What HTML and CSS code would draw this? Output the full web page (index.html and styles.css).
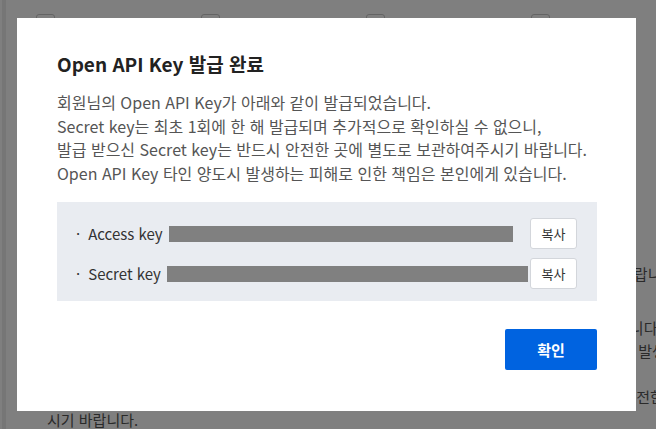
FILE: index.html
```html
<!DOCTYPE html>
<html lang="ko">
<head>
<meta charset="utf-8">
<title>Open API Key 발급 완료</title>
<link rel="stylesheet" href="styles.css">
</head>
<body>
<div class="page">
  <div class="side-line"></div>
  <div class="bg-top">
    <label class="bg-check"><span class="box"></span><span>서비스 이용약관</span></label>
    <label class="bg-check"><span class="box"></span><span>개인정보 수집</span></label>
    <label class="bg-check"><span class="box"></span><span>제3자 제공</span></label>
    <label class="bg-check"><span class="box"></span><span>수신 동의</span></label>
  </div>
  <div class="bg-text">
    <p>발급된 Open API Key는 회원님의 계정에 귀속됩니다.</p>
    <p>Secret key는 최초 1회만 확인하실 수 있으므로 반드시 안전한 곳에 별도로 보관하여 주시기 바랍니다.</p>
  </div>
  <div class="bg-text second">
    <p>Open API Key는 이용 목적에 맞게 사용하여야 하며, 회원님께서 직접 책임지고 관리하여야 합니다.</p>
    <p>Open API Key의 타인 양도, 대여 등으로 인하여 발생하는 모든 피해는 본인에게 있으며 회사는 발생</p>
    <p>않습니다.</p>
    <p>Key 유출이 의심되는 경우 즉시 재발급을 신청하시고 기존 Key는 사용하지 마시기 바랍니다. 안전한 이용을</p>
    <p>시기 바랍니다.</p>
  </div>
</div>
<div class="overlay"></div>
<div class="modal" role="dialog" aria-labelledby="modal-title">
  <h2 class="modal-title" id="modal-title">Open API Key 발급 완료</h2>
  <div class="modal-desc">
    <p>회원님의 Open API Key가 아래와 같이 발급되었습니다.</p>
    <p>Secret key는 최초 1회에 한 해 발급되며 추가적으로 확인하실 수 없으니,</p>
    <p>발급 받으신 Secret key는 반드시 안전한 곳에 별도로 보관하여주시기 바랍니다.</p>
    <p>Open API Key 타인 양도시 발생하는 피해로 인한 책임은 본인에게 있습니다.</p>
  </div>
  <div class="key-box">
    <div class="key-row">
      <span class="key-dot">·</span>
      <span class="key-label">Access key</span>
      <span class="key-value" style="width:344px"></span>
      <button class="copy-btn" type="button">복사</button>
    </div>
    <div class="key-row">
      <span class="key-dot">·</span>
      <span class="key-label">Secret key</span>
      <span class="key-value" style="width:361px"></span>
      <button class="copy-btn" type="button">복사</button>
    </div>
  </div>
  <div class="modal-actions">
    <button class="confirm-btn" type="button">확인</button>
  </div>
</div>
</body>
</html>
```

FILE: styles.css
```css
* {
  box-sizing: border-box;
}

html, body {
  margin: 0;
  padding: 0;
}

body {
  width: 656px;
  height: 429px;
  overflow: hidden;
  background: #ffffff;
  font-family: "Noto Sans CJK KR", "Noto Sans", sans-serif;
  color: #333333;
}

.page {
  position: relative;
  height: 429px;
  overflow: hidden;
}

.side-line {
  position: absolute;
  left: 2px;
  top: 0;
  width: 4px;
  height: 429px;
  background: #ededed;
}

.bg-top {
  display: flex;
  padding: 14px 0 0 36px;
  height: 37px;
}

.bg-check {
  display: flex;
  align-items: flex-start;
  gap: 15px;
  flex: none;
  width: 165px;
  overflow: hidden;
  white-space: nowrap;
  font-size: 15px;
  line-height: 23px;
  color: #444444;
}

.bg-check .box {
  width: 19px;
  height: 19px;
  border: 1px solid #c8c8c8;
  border-radius: 3px;
  background: #ffffff;
  flex: none;
}

.bg-text {
  margin-top: 201.5px;
  padding-left: 47px;
  font-size: 15px;
  line-height: 23px;
  color: #555555;
  white-space: nowrap;
}

.bg-text.second {
  margin-top: 31px;
}

.bg-text p {
  margin: 0;
}

.overlay {
  position: fixed;
  inset: 0;
  background: rgba(0, 0, 0, 0.5);
}

.modal {
  position: absolute;
  left: 17px;
  top: 18px;
  width: 619px;
  height: 393px;
  background: #ffffff;
  padding: 32px 39px 40px 40px;
  display: flex;
  flex-direction: column;
}

.modal-title {
  margin: 0;
  font-size: 19px;
  line-height: 28px;
  font-weight: 700;
  color: #222222;
}

.modal-desc {
  margin-top: 13px;
  font-size: 16px;
  line-height: 23.5px;
  color: #555555;
}

.modal-desc p {
  margin: 0;
  white-space: nowrap;
}

.key-box {
  margin-top: 17px;
  background: #e9ecf1;
  padding: 16px 20px 12px 19px;
  display: flex;
  flex-direction: column;
  gap: 9px;
}

.key-row {
  display: flex;
  align-items: center;
  height: 31px;
}

.key-dot {
  font-size: 15px;
  color: #333333;
  margin-right: 8px;
}

.key-label {
  font-size: 15px;
  color: #333333;
  white-space: nowrap;
  margin-right: 6px;
}

.key-value {
  display: block;
  height: 16px;
  background: #808080;
}

.copy-btn {
  margin-left: auto;
  width: 47px;
  height: 31px;
  border: 1px solid #d3d6db;
  border-radius: 3px;
  background: #ffffff;
  font-family: "Noto Sans CJK KR", "Noto Sans", sans-serif;
  font-size: 13px;
  color: #333333;
  padding: 0;
}

.modal-actions {
  margin-top: 28px;
  display: flex;
  justify-content: flex-end;
}

.confirm-btn {
  width: 92px;
  height: 41px;
  border: none;
  border-radius: 2px;
  background: #0063e0;
  color: #ffffff;
  font-family: "Noto Sans CJK KR", "Noto Sans", sans-serif;
  font-size: 15px;
  font-weight: 700;
  padding: 0;
}
```
